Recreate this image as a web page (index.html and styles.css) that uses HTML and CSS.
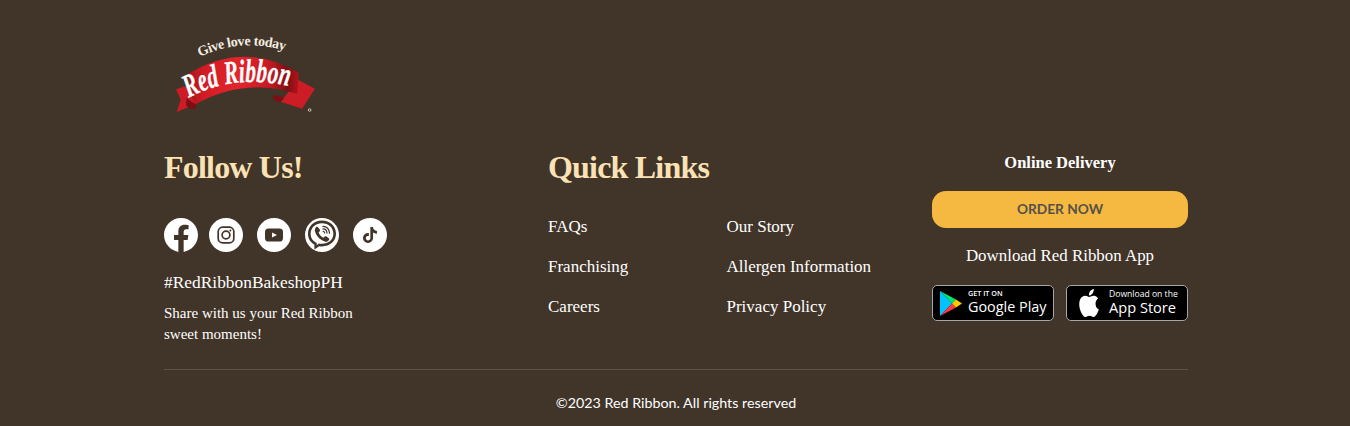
FILE: index.html
```html
<!DOCTYPE html>
<html lang="en">
<head>
  <meta charset="UTF-8">
  <title>Red Ribbon</title>
  <link rel="stylesheet" href="styles.css">
</head>
<body>

  <footer class="footer">
    <svg class="logo" viewBox="0 0 510 285" role="img" aria-label="Red Ribbon">
      <defs>
        <linearGradient id="band" x1="0" y1="0" x2="1" y2="0">
          <stop offset="0" stop-color="#a81219"/>
          <stop offset="0.14" stop-color="#d01c25"/>
          <stop offset="0.45" stop-color="#e4242b"/>
          <stop offset="0.72" stop-color="#c81b24"/>
          <stop offset="0.9" stop-color="#7f0e14"/>
          <stop offset="1" stop-color="#b5141c"/>
        </linearGradient>
        <path id="arc-top" d="M112 84 Q250 16 400 70"/>
        <path id="arc-name" d="M82 206 Q235 122 420 178"/>
      </defs>
      <path class="logo-tail" d="M48 178 L78 168 L108 222 L50 246 L62 210 Z"/>
      <path class="logo-tail" d="M415 150 L465 176 L426 236 L362 215 L390 180 Z"/>
      <path class="logo-fold" d="M80 205 Q96 218 108 222 L108 236 Q90 240 78 226 Z"/>
      <path class="logo-fold" d="M338 198 Q360 192 372 206 L360 216 Q340 216 338 198 Z"/>
      <path fill="url(#band)" d="M84 132 Q250 30 416 128 L412 192 Q250 140 104 224 Z"/>
      <text class="logo-tag"><textPath href="#arc-top" textLength="262" startOffset="8">Give love today</textPath></text>
      <text class="logo-name"><textPath href="#arc-name" textLength="310" lengthAdjust="spacingAndGlyphs" startOffset="4">Red Ribbon</textPath></text>
      <circle class="logo-reg" cx="449" cy="240" r="4"/>
    </svg>

    <div class="columns">
      <div class="col">
        <h2>Follow Us!</h2>
        <div class="socials">
          <a href="#" class="social social-fb">
            <svg viewBox="0 0 24 24"><path fill="#fff" d="M24 12.073c0-6.627-5.373-12-12-12s-12 5.373-12 12c0 5.99 4.388 10.954 10.125 11.854v-8.385H7.078v-3.47h3.047V9.43c0-3.007 1.792-4.669 4.533-4.669 1.312 0 2.686.235 2.686.235v2.953H15.83c-1.491 0-1.956.925-1.956 1.874v2.25h3.328l-.532 3.47h-2.796v8.385C19.612 23.027 24 18.062 24 12.073z"/></svg>
          </a>
          <a href="#" class="social">
            <svg viewBox="0 0 34 34">
              <circle cx="17" cy="17" r="17" fill="#fff"/>
              <rect x="9.2" y="9.2" width="15.6" height="15.6" rx="4.4" fill="none" stroke="#413428" stroke-width="1.7"/>
              <circle cx="17" cy="17" r="3.9" fill="none" stroke="#413428" stroke-width="1.7"/>
              <circle cx="21.4" cy="12.6" r="1" fill="#413428"/>
            </svg>
          </a>
          <a href="#" class="social">
            <svg viewBox="0 0 34 34">
              <circle cx="17" cy="17" r="17" fill="#fff"/>
              <rect x="8" y="10.5" width="18" height="13" rx="3.6" fill="#413428"/>
              <path fill="#fff" d="M15 14.5 L20 17 L15 19.5 Z"/>
            </svg>
          </a>
          <a href="#" class="social">
            <svg viewBox="0 0 34 34">
              <circle cx="17" cy="17" r="17" fill="#fff"/>
              <path fill="#413428" fill-rule="evenodd" d="M17 2.600C9 2.600 3 8.400 3 15.800c0 4.800 2.400 8.600 6.400 10.800v5l4.800-3.400c1 .2 1.900.2 2.800.2 8 0 14-5.400 14-12.600C31 8.400 25 2.600 17 2.600zM17 5.200C23.600 5.200 28.400 9.800 28.400 15.800 28.400 21.600 23.600 25.800 17 25.800c-1 0-2.100-.1-3.200-.4L11.700 27.200V25C7.600 23.200 5.600 20 5.600 15.800 5.600 9.800 10.400 5.200 17 5.200z"/>
              <path fill="#413428" d="M11 9.200c.8-.7 1.700-.6 2.200.2l1.500 2c.5.8.4 1.600-.2 2.100l-.9.8c.7 2.500 2.400 4.400 4.900 5.500l.9-1c.5-.7 1.300-.7 2.100-.2l2 1.300c.9.700 1 1.500.4 2.200-1 1.400-2.400 2.200-4 1.500-5.200-2.100-8.700-5.600-10-10.700-.3-1.500.3-2.700 1.100-3.700z"/>
              <path fill="none" stroke="#413428" stroke-width="1.200" stroke-linecap="round" d="M17.800 8.300c3.900.2 6.500 3 6.700 6.900M18 10.900c2.300.1 3.900 1.800 4 4.200M18.200 13.300c.9.100 1.400.7 1.500 1.700"/>
            </svg>
          </a>
          <a href="#" class="social">
            <svg viewBox="0 0 34 34">
              <circle cx="17" cy="17" r="17" fill="#fff"/>
              <svg x="9" y="9" width="16" height="16" viewBox="0 0 24 24"><path fill="#413428" d="M12.525.02c1.31-.02 2.61-.01 3.91-.02.08 1.53.63 3.09 1.75 4.17 1.12 1.11 2.7 1.62 4.24 1.79v4.03c-1.44-.05-2.89-.35-4.2-.97-.57-.26-1.1-.59-1.62-.93-.01 2.92.01 5.84-.02 8.75-.08 1.4-.54 2.79-1.35 3.94-1.31 1.92-3.58 3.17-5.91 3.21-1.43.08-2.86-.31-4.08-1.03-2.02-1.19-3.44-3.37-3.65-5.71-.02-.5-.03-1-.01-1.49.18-1.9 1.12-3.72 2.58-4.96 1.66-1.44 3.98-2.13 6.15-1.72.02 1.48-.04 2.96-.04 4.44-.99-.32-2.15-.23-3.02.37-.63.41-1.11 1.04-1.36 1.75-.21.51-.15 1.07-.14 1.61.24 1.64 1.82 3.02 3.5 2.87 1.12-.01 2.19-.66 2.77-1.61.19-.33.4-.67.41-1.06.1-1.79.06-3.57.07-5.36.01-4.03-.01-8.05.02-12.07z"/></svg>
            </svg>
          </a>
        </div>
        <p class="hashtag">#RedRibbonBakeshopPH</p>
        <p class="share">Share with us your Red Ribbon<br>sweet moments!</p>
      </div>

      <div class="col">
        <h2>Quick Links</h2>
        <div class="links">
          <a href="#">FAQs</a>
          <a href="#">Our Story</a>
          <a href="#">Franchising</a>
          <a href="#">Allergen Information</a>
          <a href="#">Careers</a>
          <a href="#">Privacy Policy</a>
        </div>
      </div>

      <div class="col col-order">
        <h4>Online Delivery</h4>
        <a href="#" class="order-btn">ORDER NOW</a>
        <p class="app-title">Download Red Ribbon App</p>
        <div class="badges">
          <a href="#" class="badge">
            <svg class="badge-icon" viewBox="0 0 22 25">
              <path fill="#00c3ff" d="M0 0 L0 25 L12 12.500 Z"/>
              <path fill="#00e676" d="M0 0 L12 12.500 L16 8.500 Z"/>
              <path fill="#ff3a44" d="M0 25 L12 12.500 L16 16.500 Z"/>
              <path fill="#ffc800" d="M16 8.500 L22 12.500 L16 16.500 L12 12.500 Z"/>
            </svg>
            <span class="badge-text">
              <small class="get-it">GET IT ON</small>
              <b>Google Play</b>
            </span>
          </a>
          <a href="#" class="badge">
            <svg class="badge-icon apple" viewBox="0 0 24 24" preserveAspectRatio="none"><path fill="#fff" d="M12.152 6.896c-.948 0-2.415-1.078-3.96-1.04-2.04.027-3.91 1.183-4.961 3.014-2.117 3.675-.546 9.103 1.519 12.09 1.013 1.454 2.208 3.09 3.792 3.039 1.52-.065 2.09-.987 3.935-.987 1.831 0 2.35.987 3.96.948 1.637-.026 2.676-1.48 3.676-2.948 1.156-1.688 1.636-3.325 1.662-3.415-.039-.013-3.182-1.221-3.22-4.857-.026-3.04 2.48-4.494 2.597-4.559-1.429-2.09-3.623-2.324-4.39-2.376-2-.156-3.675 1.09-4.61 1.09zM15.53 3.83c.843-1.012 1.4-2.427 1.245-3.83-1.207.052-2.662.805-3.532 1.818-.78.896-1.454 2.338-1.273 3.714 1.338.104 2.715-.688 3.559-1.701"/></svg>
            <span class="badge-text app-text">
              <small>Download on the</small>
              <b>App Store</b>
            </span>
          </a>
        </div>
      </div>
    </div>

    <div class="copyright">©2023 Red Ribbon. All rights reserved</div>
  </footer>

</body>
</html>
```

FILE: styles.css
```css
body {
  margin: 0;
  background-color: #413428;
  color: #ffffff;
  font-family: 'Liberation Serif', serif;
}

a {
  color: inherit;
  text-decoration: none;
}

.footer {
  width: 1024px;
  margin-left: 164px;
  padding-top: 30px;
}

.logo {
  display: block;
  width: 170px;
  height: 95px;
  margin-left: -4px;
}

.logo-tail {
  fill: #cc1d26;
}

.logo-fold {
  fill: #7c0f14;
}

.logo-tag {
  fill: #f3ece0;
  font-family: 'Liberation Serif', serif;
  font-size: 42px;
  font-weight: bold;
}

.logo-name {
  fill: #ffffff;
  stroke: #ffffff;
  stroke-width: 1px;
  font-family: 'Liberation Serif', serif;
  font-size: 98px;
  font-style: italic;
  font-weight: bold;
}

.logo-reg {
  fill: none;
  stroke: #ffffff;
  stroke-width: 2px;
}

.columns {
  display: grid;
  grid-template-columns: 256px 256px 256px;
  column-gap: 128px;
  margin-top: 23px;
  height: 221px;
  border-bottom: 1px solid #5f5043;
}

h2 {
  margin: 0;
  color: #fbe2b4;
  font-size: 32px;
  font-weight: bold;
  letter-spacing: -0.8px;
  line-height: 38px;
}

.socials {
  display: flex;
  gap: 14px;
  margin-top: 32px;
}

.social {
  display: block;
  width: 34px;
  height: 34px;
}

.social-fb {
  margin-right: -3px;
}

.social > svg {
  display: block;
  width: 34px;
  height: 34px;
}

.hashtag {
  margin: 19px 0 0;
  font-size: 17.4px;
  line-height: 22px;
}

.share {
  margin: 10px 0 0;
  font-size: 15px;
  line-height: 21px;
}

.links {
  display: grid;
  grid-template-columns: 178.5px auto;
  grid-auto-rows: 40px;
  margin-top: 21px;
  font-size: 17px;
  line-height: 40px;
  white-space: nowrap;
}

.col-order {
  text-align: center;
}

h4 {
  margin: 0;
  padding-top: 5px;
  font-size: 16.5px;
  font-weight: bold;
  line-height: 20px;
}

.order-btn {
  display: block;
  height: 37px;
  margin-top: 18px;
  border-radius: 14px;
  background-color: #f5b840;
  color: #55504a;
  font-family: 'Lato', sans-serif;
  font-size: 13.7px;
  font-weight: bold;
  line-height: 36px;
}

.app-title {
  margin: 17px 0 0;
  font-size: 16.9px;
  line-height: 22px;
}

.badges {
  display: flex;
  justify-content: space-between;
  margin-top: 18px;
}

.badge {
  display: flex;
  align-items: center;
  box-sizing: border-box;
  width: 122px;
  height: 36px;
  padding-left: 7px;
  border: 1px solid #a6a6a6;
  border-radius: 5px;
  background-color: #000000;
  text-align: left;
}

.badge-icon {
  width: 22px;
  height: 25px;
  margin-right: 6px;
  flex-shrink: 0;
}

.apple {
  width: 24px;
  height: 28px;
  margin-left: 3px;
  margin-right: 8px;
}

.badge-text {
  display: flex;
  flex-direction: column;
  margin-top: -3px;
  font-family: 'Open Sans', sans-serif;
}

.badge-text small {
  font-size: 8.4px;
  line-height: 9px;
  white-space: nowrap;
}

.badge-text .get-it {
  font-size: 7.2px;
  font-weight: 600;
}

.badge-text b {
  font-size: 14.4px;
  font-weight: 400;
  line-height: 17px;
  white-space: nowrap;
}

.app-text {
  margin-top: 0;
}

.app-text small {
  font-size: 8.6px;
}

.app-text b {
  font-size: 14.6px;
}

.copyright {
  padding-top: 24px;
  font-family: 'Lato', sans-serif;
  font-size: 14.3px;
  line-height: 18px;
  text-align: center;
}
```
